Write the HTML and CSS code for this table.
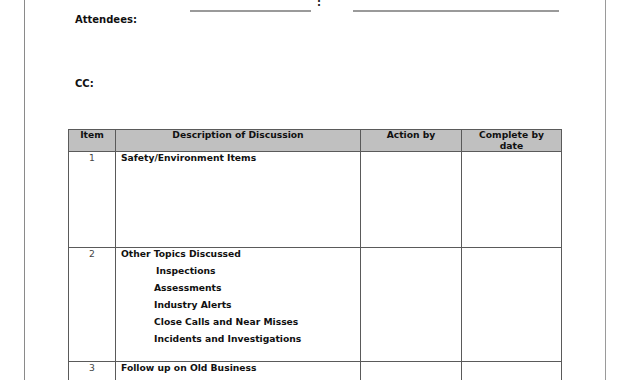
FILE: index.html
```html
<!DOCTYPE html>
<html>
<head>
<meta charset="utf-8">
<link rel="stylesheet" href="styles.css">
</head>
<body>
<div class="page">
  <div class="topline">
    <span class="rule rule-a"></span>
    <span class="colon">:</span>
    <span class="rule rule-b"></span>
  </div>
  <div class="label label-attendees">Attendees:</div>
  <div class="label label-cc">CC:</div>
  <table class="minutes">
    <colgroup>
      <col class="c-item">
      <col class="c-desc">
      <col class="c-action">
      <col class="c-date">
    </colgroup>
    <thead>
      <tr class="head">
        <th>Item</th>
        <th>Description of Discussion</th>
        <th>Action by</th>
        <th>Complete by date</th>
      </tr>
    </thead>
    <tbody>
      <tr class="row-1">
        <td class="num">1</td>
        <td class="desc">Safety/Environment Items</td>
        <td></td>
        <td></td>
      </tr>
      <tr class="row-2">
        <td class="num">2</td>
        <td class="desc">
          <div>Other Topics Discussed</div>
          <div class="sub sub-first">Inspections</div>
          <div class="sub">Assessments</div>
          <div class="sub">Industry Alerts</div>
          <div class="sub">Close Calls and Near Misses</div>
          <div class="sub">Incidents and Investigations</div>
        </td>
        <td></td>
        <td></td>
      </tr>
      <tr class="row-3">
        <td class="num">3</td>
        <td class="desc">Follow up on Old Business</td>
        <td></td>
        <td></td>
      </tr>
    </tbody>
  </table>
</div>
</body>
</html>
```

FILE: styles.css
```css
html, body {
  margin: 0;
  padding: 0;
  background: #ffffff;
}

body {
  font-family: "DejaVu Sans", "Liberation Sans", sans-serif;
  color: #111;
  overflow: hidden;
}

.page {
  margin-left: 24px;
  width: 580px;
  height: 380px;
  border-left: 1px solid #8a8a8a;
  border-right: 1px solid #9a9a9a;
  overflow: hidden;
}

.topline {
  display: flex;
  align-items: flex-start;
  height: 12px;
  padding-left: 165px;
}

.rule {
  display: block;
  height: 2px;
  margin-top: 10px;
  background: #9a9a9a;
}

.rule-a {
  width: 121px;
}

.rule-b {
  width: 206px;
  margin-left: 30px;
}

.colon {
  display: block;
  width: 6px;
  margin-left: 6px;
  font-size: 10px;
  font-weight: bold;
  line-height: 10px;
  margin-top: -2px;
  color: #222;
}

.label {
  padding-left: 50px;
  font-size: 10px;
  font-weight: bold;
  line-height: 12px;
  color: #111;
}

.label-attendees {
  margin-top: 2px;
}

.label-cc {
  margin-top: 52px;
}

.minutes {
  margin-top: 39px;
  margin-left: 43px;
  border-collapse: collapse;
  table-layout: fixed;
  width: 494px;
  font-size: 9.2px;
  line-height: 11px;
  font-weight: bold;
}

.c-item { width: 47px; }
.c-desc { width: 245px; }
.c-action { width: 101px; }
.c-date { width: 100px; }

.minutes th,
.minutes td {
  border: 1px solid #5a5a5a;
  vertical-align: top;
  padding: 0;
}

.head th {
  background: #c0c0c0;
  text-align: center;
  height: 21px;
  line-height: 10.5px;
  padding: 0 14px;
  font-weight: bold;
}

.head th:first-child,
.head th:nth-child(2) {
  padding: 0;
}

.num {
  text-align: center;
  font-weight: normal;
  color: #444;
}

.desc {
  padding-left: 5px !important;
}

.row-1 td {
  height: 95px;
}

.row-2 td {
  height: 113px;
}

.row-3 td {
  height: 30px;
}

.sub {
  margin-top: 6px;
  padding-left: 33px;
}

.sub-first {
  padding-left: 35px;
}
```
